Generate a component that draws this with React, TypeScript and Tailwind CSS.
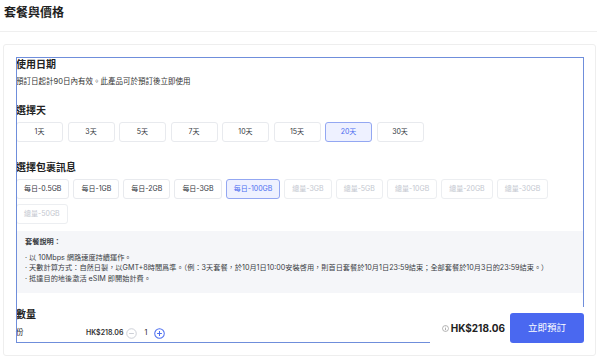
import React from 'react';

const days = ['1天', '3天', '5天', '7天', '10天', '15天', '20天', '30天'];

const packages: { label: string; disabled?: boolean; selected?: boolean }[] = [
  { label: '每日-0.5GB' },
  { label: '每日-1GB' },
  { label: '每日-2GB' },
  { label: '每日-3GB' },
  { label: '每日-100GB', selected: true },
  { label: '總量-3GB', disabled: true },
  { label: '總量-5GB', disabled: true },
  { label: '總量-10GB', disabled: true },
  { label: '總量-20GB', disabled: true },
  { label: '總量-30GB', disabled: true },
  { label: '總量-50GB', disabled: true },
];

function Chip({
  label,
  selected,
  disabled,
  className,
}: {
  label: string;
  selected?: boolean;
  disabled?: boolean;
  className?: string;
}) {
  let tone = 'border-[#e8eaee] bg-white text-[#333740]';
  if (selected) tone = 'border-[#93a7f2] bg-[#eef1ff] text-[#4d6ef0]';
  if (disabled) tone = 'border-[#eceef1] bg-white text-[#c3c7cf]';
  return (
    <div
      className={`flex h-[20px] items-center justify-center rounded-[3px] border ${tone} ${className ?? ''}`}
    >
      {label}
    </div>
  );
}

export default function App() {
  return (
    <div
      className="relative h-[362px] w-[600px] overflow-hidden bg-white text-[#222]"
      style={{ fontFamily: 'Inter, "Noto Sans CJK TC", sans-serif' }}
    >
      <div className="flex h-[32px] w-[597px] items-start border-b border-[#efefef] pl-[4px] pt-[4px]">
        <h2 className="text-[12px] font-bold leading-[18px] text-[#1f1f1f]">套餐與價格</h2>
      </div>

      <div className="ml-[3px] mt-[12px] h-[312px] w-[593px] rounded-[3px] border border-[#eeeeee] pl-[12px] pt-[12px]">
        <div className="relative h-[286px] w-[568px] outline outline-[1.5px] -outline-offset-[1.5px] outline-[#6f8edb]">
          <h3 className="text-[10px] font-semibold leading-[14px]">使用日期</h3>
          <p className="mt-[5px] text-[7.5px] leading-[11px] text-[#333]">
            預訂日起計90日內有效。此產品可於預訂後立即使用
          </p>

          <h3 className="mt-[16px] text-[10px] font-semibold leading-[14px]">選擇天</h3>
          <div className="mt-[5px] flex gap-[4.5px]">
            {days.map((d) => (
              <Chip
                key={d}
                label={d}
                selected={d === '20天'}
                className="w-[47px] text-[7px]"
              />
            ))}
          </div>

          <h3 className="mt-[18px] text-[10px] font-semibold leading-[14px]">選擇包裹訊息</h3>
          <div className="mt-[5px] flex w-[540px] flex-wrap gap-x-[4px] gap-y-[5px]">
            {packages.map((p) => (
              <Chip
                key={p.label}
                label={p.label}
                selected={p.selected}
                disabled={p.disabled}
                className="px-[7px] text-[7px]"
              />
            ))}
          </div>

          <div className="mt-[7px] h-[62px] bg-[#f5f6f9] pl-[9px] pt-[6px] text-[7.2px] leading-[10.5px] text-[#3a3d44]">
            <div className="mb-[5px] font-semibold">套餐說明：</div>
            <div>· 以 10Mbps 網路速度持續運作。</div>
            <div>
              · 天數計算方式：自然日製，以GMT+8時間爲準。（例：3天套餐，於10月1日10:00安裝啓用，則首日套餐於10月1日23:59結束；全部套餐於10月3日的23:59結束。）
            </div>
            <div>· 抵達目的地後激活 eSIM 即開始計費。</div>
          </div>

          <h3 className="mt-[14px] text-[10px] font-semibold leading-[14px]">數量</h3>
          <div className="mt-[6px] flex items-center text-[7px] leading-[12px]">
            <span className="w-[70px] text-[7.5px]">份</span>
            <span className="font-semibold text-[#333]">HK$218.06</span>
            <svg className="ml-[3px]" width="11" height="11" viewBox="0 0 12 12">
              <circle cx="6" cy="6" r="5.2" fill="none" stroke="#c8ccd3" strokeWidth="1" />
              <path d="M3.4 6h5.2" stroke="#c8ccd3" strokeWidth="1" />
            </svg>
            <span className="ml-[5px] w-[7px] text-center">1</span>
            <svg className="ml-[5px]" width="11" height="11" viewBox="0 0 12 12">
              <circle cx="6" cy="6" r="5.2" fill="none" stroke="#4d6ef0" strokeWidth="1.1" />
              <path d="M3.4 6h5.2M6 3.4v5.2" stroke="#4d6ef0" strokeWidth="1.1" />
            </svg>
          </div>

          {/* sticky checkout bar sits over the box's lower edge */}
          <div className="absolute bottom-0 right-0 flex h-[36px] w-[154px] items-end bg-white">
            <div className="flex h-[30px] flex-1 items-center justify-end pr-[5px]">
              <svg width="7" height="7" viewBox="0 0 8 8" className="mr-[2px]">
                <circle cx="4" cy="4" r="3.4" fill="none" stroke="#888" strokeWidth="0.7" />
                <path d="M4 3.5v2.4" stroke="#888" strokeWidth="0.8" />
                <circle cx="4" cy="2.3" r="0.45" fill="#888" />
              </svg>
              <span className="text-[10px] font-bold text-[#222]">HK$218.06</span>
            </div>
            <button className="flex h-[30px] w-[74px] items-center justify-center rounded-[3px] bg-[#4a68f0] text-[9.5px] text-white">
              立即預訂
            </button>
          </div>
        </div>
      </div>
    </div>
  );
}
